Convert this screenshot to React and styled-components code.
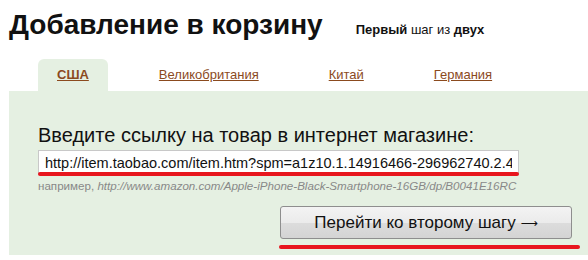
import React from 'react';
import styled, { createGlobalStyle } from 'styled-components';

const GlobalStyle = createGlobalStyle`
  body {
    margin: 0;
    background: #fff;
    font-family: "Liberation Sans", Arial, sans-serif;
    color: #111;
  }
`;

const Page = styled.div`
  width: 588px;
  height: 260px;
  overflow: hidden;
`;

const Header = styled.div`
  display: flex;
  align-items: baseline;
  padding: 8px 0 0 9px;
  height: 59px;
  box-sizing: border-box;
`;

const Title = styled.h1`
  margin: 0;
  font-size: 28px;
  font-weight: bold;
  line-height: 34px;
  color: #111;
`;

const Step = styled.span`
  margin-left: 33px;
  font-size: 13px;
  color: #111;

  b {
    font-weight: bold;
  }
`;

const Tabs = styled.div`
  display: flex;
  gap: 32px;
  margin-left: 38px;
`;

const Tab = styled.a`
  display: block;
  padding: 0 19px;
  height: 32px;
  line-height: 32px;
  font-size: 13px;
  color: #8b4a1e;
  text-decoration: underline;
  font-weight: ${p => (p.$active ? 'bold' : 'normal')};
  background: ${p => (p.$active ? '#e5f0e2' : 'transparent')};
  border-radius: 6px 6px 0 0;
  cursor: pointer;
`;

const Panel = styled.div`
  margin-left: 9px;
  height: 164px;
  background: #e5f0e2;
  padding: 32px 0 0 29px;
  box-sizing: border-box;
`;

const Label = styled.div`
  font-size: 20px;
  line-height: 24px;
  color: #111;
`;

const InputWrap = styled.div`
  width: 481px;
  margin-top: 3px;
`;

const UrlInput = styled.input`
  display: block;
  width: 100%;
  height: 25px;
  box-sizing: border-box;
  border: 1px solid #c8c8c8;
  background: #fff;
  padding: 0 6px;
  font-family: "Liberation Sans", Arial, sans-serif;
  font-size: 14.5px;
  color: #111;
  outline: none;
`;

const RedLine = styled.div`
  height: 4px;
  border-radius: 2px;
  background: #e8161e;
  width: ${p => p.$w}px;
  margin-top: ${p => p.$mt || 0}px;
  margin-left: ${p => p.$ml || 0}px;
`;

const Hint = styled.div`
  margin-top: 3px;
  font-size: 11.6px;
  color: #888;

  i {
    font-style: italic;
  }
`;

const ButtonRow = styled.div`
  display: flex;
  flex-direction: column;
  align-items: flex-start;
  margin: 14px 0 0 242px;
`;

const GoButton = styled.button`
  width: 292px;
  height: 33px;
  border: 1px solid #8e8e8e;
  border-radius: 3px;
  background: linear-gradient(#f3f3f3 0%, #ebebeb 50%, #dcdcdc 51%, #d4d4d4 100%);
  font-family: "Liberation Sans", Arial, sans-serif;
  font-size: 17px;
  color: #111;
  cursor: pointer;
`;

const Arrow = styled.span`
  font-family: "DejaVu Sans", sans-serif;
  font-size: 12px;
  vertical-align: 1px;
`;

export default function App() {
  return (
    <Page>
      <GlobalStyle />
      <Header>
        <Title>Добавление в корзину</Title>
        <Step><b>Первый</b> шаг из <b>двух</b></Step>
      </Header>
      <Tabs>
        <Tab $active>США</Tab>
        <Tab>Великобритания</Tab>
        <Tab>Китай</Tab>
        <Tab>Германия</Tab>
      </Tabs>
      <Panel>
        <Label>Введите ссылку на товар в интернет магазине:</Label>
        <InputWrap>
          <UrlInput readOnly value="http://item.taobao.com/item.htm?spm=a1z10.1.14916466-296962740.2.4" />
          <RedLine $w={481} $mt={-3} />
        </InputWrap>
        <Hint>например, <i>http://www.amazon.com/Apple-iPhone-Black-Smartphone-16GB/dp/B0041E16RC</i></Hint>
        <ButtonRow>
          <GoButton>Перейти ко второму шагу <Arrow>⟶</Arrow></GoButton>
          <RedLine $w={301} $mt={6} $ml={-1} />
        </ButtonRow>
      </Panel>
    </Page>
  );
}
